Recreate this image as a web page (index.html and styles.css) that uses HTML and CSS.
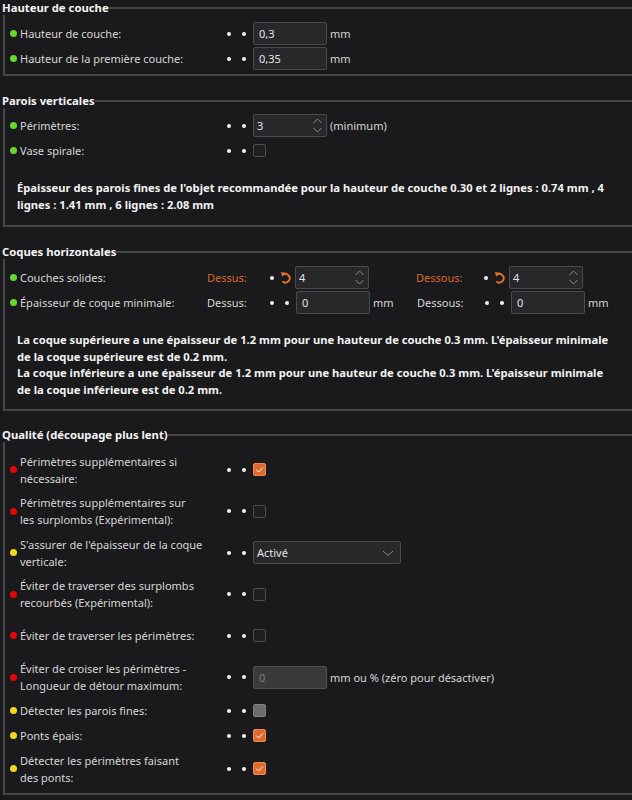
FILE: index.html
```html
<!DOCTYPE html>
<html lang="fr">
<head>
    <meta charset="UTF-8">
    <title>Paramètres d'impression</title>
    <link rel="stylesheet" href="styles.css">
</head>
<body>
    <!-- Hauteur de couche -->
    <div class="group first">
        <div class="group-title"><span>Hauteur de couche</span></div>
        <div class="group-body">
            <div class="row">
                <span class="dot green"></span>
                <span class="label">Hauteur de couche:</span>
                <span class="marks"><i></i><i></i></span>
                <span class="field"><span class="value">0,3</span></span>
                <span class="unit">mm</span>
            </div>
            <div class="row">
                <span class="dot green"></span>
                <span class="label">Hauteur de la première couche:</span>
                <span class="marks"><i></i><i></i></span>
                <span class="field"><span class="value">0,35</span></span>
                <span class="unit">mm</span>
            </div>
        </div>
    </div>

    <!-- Parois verticales -->
    <div class="group walls">
        <div class="group-title"><span>Parois verticales</span></div>
        <div class="group-body">
            <div class="row">
                <span class="dot green"></span>
                <span class="label">Périmètres:</span>
                <span class="marks"><i></i><i></i></span>
                <span class="field spin"><span class="value">3</span>
                    <svg class="arrows" width="11" height="17" viewBox="0 0 11 17"><path d="M1.5 6 L5.5 2 L9.5 6 M1.5 11 L5.5 15 L9.5 11" fill="none" stroke="#8a8a8e" stroke-width="1"/></svg>
                </span>
                <span class="unit">(minimum)</span>
            </div>
            <div class="row">
                <span class="dot green"></span>
                <span class="label">Vase spirale:</span>
                <span class="marks"><i></i><i></i></span>
                <span class="check"></span>
            </div>
            <p class="note">Épaisseur des parois fines de l'objet recommandée pour la hauteur de couche 0.30 et 2 lignes : 0.74 mm , 4<br>lignes : 1.41 mm , 6 lignes : 2.08 mm</p>
        </div>
    </div>

    <!-- Coques horizontales -->
    <div class="group shells">
        <div class="group-title"><span>Coques horizontales</span></div>
        <div class="group-body">
            <div class="row">
                <span class="dot green"></span>
                <span class="label short">Couches solides:</span>
                <span class="sub top modified">Dessus:</span>
                <span class="marks reset"><i></i>
                    <svg class="undo" width="11" height="13" viewBox="0 0 11 13"><path d="M3.4 3.4 A4.3 4.3 0 1 1 2.4 10.4" fill="none" stroke="#e8702a" stroke-width="1.9"/><path d="M0.6 1.2 L5.6 1.6 L2.6 5.8 Z" fill="#e8702a"/></svg>
                </span>
                <span class="field spin"><span class="value">4</span>
                    <svg class="arrows" width="11" height="17" viewBox="0 0 11 17"><path d="M1.5 6 L5.5 2 L9.5 6 M1.5 11 L5.5 15 L9.5 11" fill="none" stroke="#8a8a8e" stroke-width="1"/></svg>
                </span>
                <span class="unit gap"></span>
                <span class="sub bottom modified">Dessous:</span>
                <span class="marks reset"><i></i>
                    <svg class="undo" width="11" height="13" viewBox="0 0 11 13"><path d="M3.4 3.4 A4.3 4.3 0 1 1 2.4 10.4" fill="none" stroke="#e8702a" stroke-width="1.9"/><path d="M0.6 1.2 L5.6 1.6 L2.6 5.8 Z" fill="#e8702a"/></svg>
                </span>
                <span class="field spin"><span class="value">4</span>
                    <svg class="arrows" width="11" height="17" viewBox="0 0 11 17"><path d="M1.5 6 L5.5 2 L9.5 6 M1.5 11 L5.5 15 L9.5 11" fill="none" stroke="#8a8a8e" stroke-width="1"/></svg>
                </span>
            </div>
            <div class="row">
                <span class="dot green"></span>
                <span class="label short">Épaisseur de coque minimale:</span>
                <span class="sub top">Dessus:</span>
                <span class="marks"><i></i><i></i></span>
                <span class="field"><span class="value">0</span></span>
                <span class="unit gap">mm</span>
                <span class="sub bottom">Dessous:</span>
                <span class="marks"><i></i><i></i></span>
                <span class="field"><span class="value">0</span></span>
                <span class="unit">mm</span>
            </div>
            <p class="note dense">La coque supérieure a une épaisseur de 1.2 mm pour une hauteur de couche 0.3 mm. L'épaisseur minimale<br>de la coque supérieure est de 0.2 mm.<br>La coque inférieure a une épaisseur de 1.2 mm pour une hauteur de couche 0.3 mm. L'épaisseur minimale<br>de la coque inférieure est de 0.2 mm.</p>
        </div>
    </div>

    <!-- Qualité -->
    <div class="group quality">
        <div class="group-title"><span>Qualité (découpage plus lent)</span></div>
        <div class="group-body">
            <div class="row tall">
                <span class="dot red"></span>
                <span class="label">Périmètres supplémentaires si<br>nécessaire:</span>
                <span class="marks"><i></i><i></i></span>
                <span class="check on"><svg width="13" height="13" viewBox="0 0 13 13"><path d="M3.2 6.6 L5.6 9 L10 4.4" fill="none" stroke="#fff" stroke-width="1"/></svg></span>
            </div>
            <div class="row tall">
                <span class="dot red"></span>
                <span class="label">Périmètres supplémentaires sur<br>les surplombs (Expérimental):</span>
                <span class="marks"><i></i><i></i></span>
                <span class="check"></span>
            </div>
            <div class="row tall">
                <span class="dot yellow"></span>
                <span class="label">S'assurer de l'épaisseur de la coque<br>verticale:</span>
                <span class="marks"><i></i><i></i></span>
                <span class="select"><span class="value">Activé</span>
                    <svg width="12" height="8" viewBox="0 0 12 8"><path d="M1 2 L6 6.5 L11 2" fill="none" stroke="#8a8a8e" stroke-width="1"/></svg>
                </span>
            </div>
            <div class="row tall">
                <span class="dot red"></span>
                <span class="label">Éviter de traverser des surplombs<br>recourbés (Expérimental):</span>
                <span class="marks"><i></i><i></i></span>
                <span class="check"></span>
            </div>
            <div class="row tall">
                <span class="dot red"></span>
                <span class="label">Éviter de traverser les périmètres:</span>
                <span class="marks"><i></i><i></i></span>
                <span class="check"></span>
            </div>
            <div class="row tall">
                <span class="dot red"></span>
                <span class="label">Éviter de croiser les périmètres -<br>Longueur de détour maximum:</span>
                <span class="marks"><i></i><i></i></span>
                <span class="field disabled"><span class="value">0</span></span>
                <span class="unit">mm ou % (zéro pour désactiver)</span>
            </div>
            <div class="row">
                <span class="dot yellow"></span>
                <span class="label">Détecter les parois fines:</span>
                <span class="marks"><i></i><i></i></span>
                <span class="check grey"></span>
            </div>
            <div class="row">
                <span class="dot yellow"></span>
                <span class="label">Ponts épais:</span>
                <span class="marks"><i></i><i></i></span>
                <span class="check on"><svg width="13" height="13" viewBox="0 0 13 13"><path d="M3.2 6.6 L5.6 9 L10 4.4" fill="none" stroke="#fff" stroke-width="1"/></svg></span>
            </div>
            <div class="row tall">
                <span class="dot yellow"></span>
                <span class="label">Détecter les périmètres faisant<br>des ponts:</span>
                <span class="marks"><i></i><i></i></span>
                <span class="check on"><svg width="13" height="13" viewBox="0 0 13 13"><path d="M3.2 6.6 L5.6 9 L10 4.4" fill="none" stroke="#fff" stroke-width="1"/></svg></span>
            </div>
        </div>
    </div>
</body>
</html>
```

FILE: styles.css
```css
body {
    margin: 0;
    background-color: #1a1a1c;
    color: #d6d6d6;
    font-family: "Noto Sans", "DejaVu Sans", sans-serif;
    font-size: 11px;
    overflow: hidden;
}

.group {
    margin-top: 17px;
}

.group.first {
    margin-top: 0;
}

.group.quality {
    margin-top: 16px;
}

.group-title {
    display: flex;
    align-items: center;
    height: 15px;
    padding-left: 2px;
}

.group-title span {
    font-size: 11.3px;
    font-weight: 700;
    color: #f4f4f4;
    white-space: nowrap;
}

.group-title::after {
    content: "";
    flex: 1;
    height: 2px;
    margin-top: 1px;
    background-color: #464649;
}

.group-body {
    margin-left: 3px;
    border-left: 2px solid #464649;
    border-bottom: 2px solid #464649;
    padding: 5px 0 3px 5px;
}

.group.first .group-body {
    padding-top: 6px;
}

.group.shells .group-body {
    padding-top: 6px;
}

.group.quality .group-body {
    padding-top: 7px;
}

.row {
    display: flex;
    align-items: center;
    height: 25px;
}

.row.tall {
    height: 41.5px;
}

.dot {
    width: 7px;
    height: 7px;
    border-radius: 50%;
    margin-right: 3px;
    flex-shrink: 0;
}

.green { background-color: #6ad62e; }
.red { background-color: #e3060a; }
.yellow { background-color: #f5d61a; }

.label {
    width: 207px;
    line-height: 17px;
    white-space: nowrap;
    flex-shrink: 0;
}

.label.short {
    width: 187px;
}

.sub {
    width: 63px;
    flex-shrink: 0;
}

.sub.bottom {
    width: 68px;
}

.modified {
    color: #d8692c;
}

.marks {
    display: flex;
    align-items: center;
    gap: 11px;
    margin-right: 7px;
    flex-shrink: 0;
}

.marks i {
    width: 4px;
    height: 4px;
    border-radius: 50%;
    background-color: #f2f2f2;
}

.marks.reset {
    gap: 6px;
    margin-right: 4px;
}

.undo {
    display: block;
}

.field {
    display: flex;
    align-items: center;
    justify-content: space-between;
    box-sizing: border-box;
    width: 74px;
    height: 23px;
    padding: 0 3px 0 5px;
    background-color: #28282b;
    border: 1px solid #4b4b4f;
    border-radius: 2px;
    color: #e4e4e4;
    flex-shrink: 0;
}

.field.spin {
    padding-left: 3px;
}

.field.disabled {
    background-color: #3a3a3c;
    border-color: #505053;
    color: #7c7c80;
}

.unit {
    margin-left: 3px;
    white-space: nowrap;
}

.unit.gap {
    width: 44px;
    flex-shrink: 0;
}

.check {
    box-sizing: border-box;
    width: 13px;
    height: 13px;
    border: 1px solid #4e4e52;
    border-radius: 2px;
    background-color: #1f1f22;
}

.check svg {
    display: block;
    margin: -1px;
}

.check.on {
    background-color: #e06a2b;
    border-color: #f08a4e;
}

.check.grey {
    background-color: #6c6c6f;
    border-color: #808084;
}

.select {
    display: flex;
    align-items: center;
    justify-content: space-between;
    box-sizing: border-box;
    width: 148px;
    height: 23px;
    padding: 0 6px 0 3px;
    background-color: #28282b;
    border: 1px solid #4b4b4f;
    border-radius: 2px;
    color: #e4e4e4;
}

.note {
    margin: 16px 0 0 7px;
    padding-bottom: 9px;
    font-size: 11.2px;
    font-weight: 700;
    line-height: 17px;
    color: #f2f2f2;
    white-space: nowrap;
}

.note.dense {
    margin-top: 17px;
    padding-bottom: 8px;
    line-height: 16.5px;
}
```
